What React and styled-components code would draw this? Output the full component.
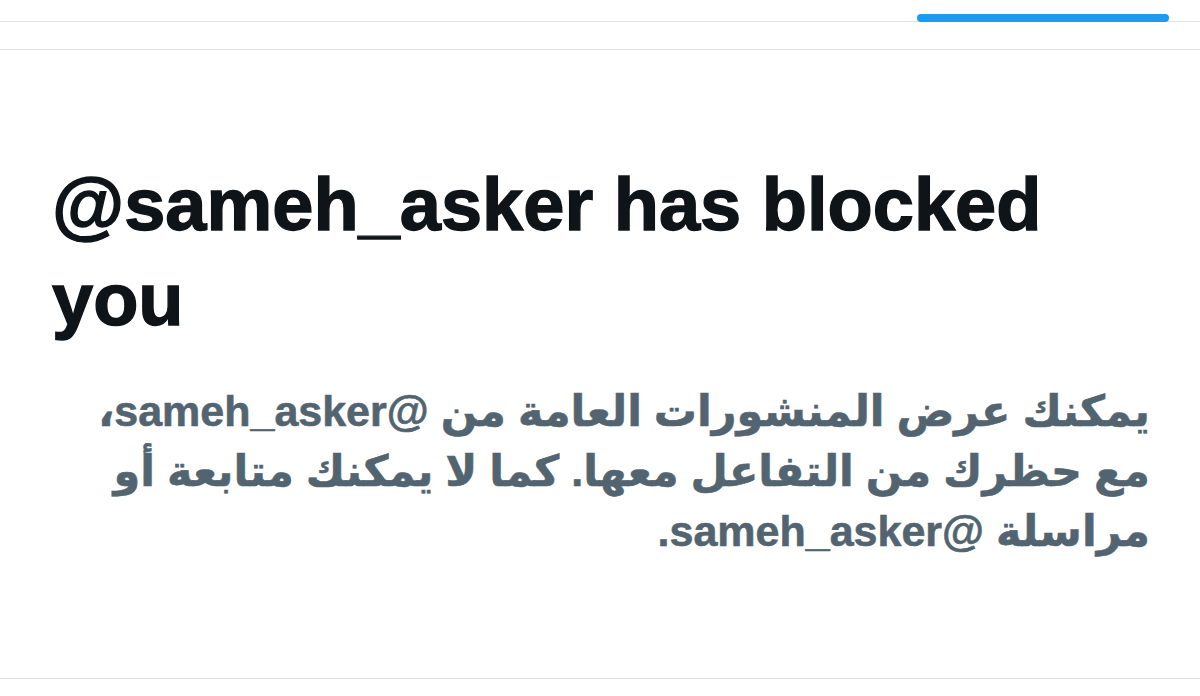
import React from "react";
import styled, { createGlobalStyle } from "styled-components";

const GlobalStyle = createGlobalStyle`
  html, body {
    margin: 0;
    padding: 0;
    background: #ffffff;
  }
  body {
    font-family: "Liberation Sans", Arial, sans-serif;
    width: 1200px;
    height: 696px;
    overflow: hidden;
  }
  * { box-sizing: border-box; }
`;

const Page = styled.div`
  display: flex;
  flex-direction: column;
  width: 1200px;
  height: 696px;
  background: #ffffff;
`;

const TabBar = styled.div`
  display: flex;
  justify-content: flex-end;
  align-items: flex-end;
  height: 22px;
  padding-right: 31px;
  border-bottom: 1px solid #e3e3e3;
`;

const TabIndicator = styled.div`
  width: 252px;
  height: 8px;
  border-radius: 4px;
  background: #1d9bf0;
  margin-bottom: -1px;
`;

const SubBar = styled.div`
  height: 28px;
  border-bottom: 1px solid #e6e6e6;
`;

const Main = styled.main`
  display: flex;
  flex-direction: column;
  height: 629px;
  padding: 107px 50px 0 52px;
  border-bottom: 1px solid #dcdcdc;
`;

const Title = styled.h1`
  margin: 0;
  font-family: "Liberation Sans", Arial, sans-serif;
  font-weight: 700;
  font-size: 74px;
  line-height: 95px;
  color: #0f1419;
  -webkit-text-stroke: 1.4px #0f1419;
`;

const Notice = styled.p`
  margin: 34px 0 0 0;
  font-family: "Liberation Sans", "DejaVu Sans", sans-serif;
  font-weight: 700;
  font-size: 43px;
  line-height: 60px;
  color: #536471;
  -webkit-text-stroke: 0.6px #536471;
  text-align: start;
`;

export default function App() {
  return (
    <>
      <GlobalStyle />
      <Page>
        <TabBar>
          <TabIndicator />
        </TabBar>
        <SubBar />
        <Main>
          <Title>@sameh_asker has blocked you</Title>
          <Notice dir="rtl">
            يمكنك عرض المنشورات العامة من @sameh_asker،
            <br />
            مع حظرك من التفاعل معها. كما لا يمكنك متابعة أو
            <br />
            مراسلة @sameh_asker.
          </Notice>
        </Main>
      </Page>
    </>
  );
}
